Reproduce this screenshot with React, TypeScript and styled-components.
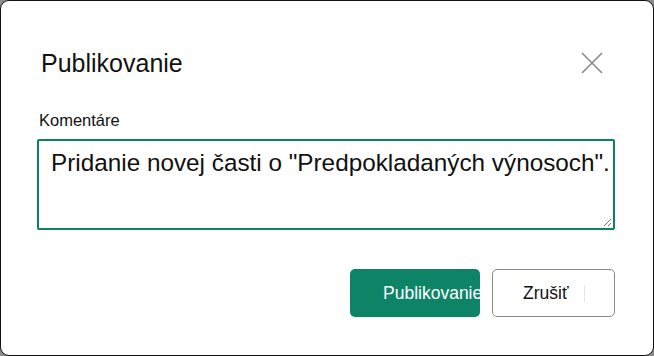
import React from "react";
import styled, { createGlobalStyle } from "styled-components";

const Global = createGlobalStyle`
  html, body { margin: 0; padding: 0; background: #8c8c8c; }
  body { font-family: "Liberation Sans", Arial, sans-serif; }
  * { box-sizing: border-box; }
`;

const Dialog = styled.div`
  width: 654px;
  height: 356px;
  background: #ffffff;
  border: 1.5px solid #111111;
  border-radius: 9px;
  display: flex;
  flex-direction: column;
  padding: 0 38px 0 36px;
  color: #111;
`;

const Header = styled.div`
  display: flex;
  align-items: center;
  justify-content: space-between;
  height: 58px;
  margin-top: 33px;
`;

const Title = styled.h1`
  margin: 0 0 0 4px;
  font-size: 25px;
  font-weight: 400;
  color: #111;
`;

const CloseButton = styled.button`
  border: none;
  background: none;
  padding: 0;
  width: 24px;
  height: 24px;
  margin-right: 11px;
  display: flex;
  align-items: center;
  justify-content: center;
  cursor: pointer;
`;

const Label = styled.label`
  margin-top: 19px;
  margin-left: 2px;
  font-size: 16.5px;
  color: #111;
`;

const Field = styled.div`
  position: relative;
  margin-top: 9px;
  height: 91px;
  border: 2px solid #0e8066;
  border-radius: 2px;
  padding: 7px 2px 8px 12px;
  font-size: 24.3px;
  line-height: 30px;
  white-space: nowrap;
  color: #111;
`;

const Grip = styled.svg`
  position: absolute;
  right: 1px;
  bottom: 1px;
`;

const Footer = styled.div`
  display: flex;
  justify-content: flex-end;
  gap: 12px;
  margin-top: 39px;
`;

const PrimaryButton = styled.button`
  width: 130px;
  height: 48px;
  border: none;
  border-radius: 5px;
  background: #0e8466;
  color: #ffffff;
  font-family: "Liberation Sans", Arial, sans-serif;
  font-size: 17.5px;
  padding: 0 0 0 33px;
  text-align: left;
  white-space: nowrap;
  overflow: hidden;
`;

const SecondaryButton = styled.button`
  position: relative;
  width: 123px;
  height: 48px;
  border: 1px solid #8a8a8a;
  border-radius: 5px;
  background: #ffffff;
  color: #111;
  font-family: "Liberation Sans", Arial, sans-serif;
  font-size: 17.5px;
  padding: 0 0 0 30px;
  text-align: left;
`;

const Divider = styled.span`
  position: absolute;
  left: 91px;
  top: 15px;
  width: 1px;
  height: 17px;
  background: #e6e6e6;
`;

export default function App() {
  return (
    <>
      <Global />
      <Dialog>
        <Header>
          <Title>Publikovanie</Title>
          <CloseButton aria-label="Zavrieť">
            <svg width="22" height="22" viewBox="0 0 22 22">
              <path d="M1 1 L21 21 M21 1 L1 21" stroke="#8a8a8a" strokeWidth="1.6" fill="none" />
            </svg>
          </CloseButton>
        </Header>
        <Label>Komentáre</Label>
        <Field>
          Pridanie novej časti o "Predpokladaných výnosoch".
          <Grip width="10" height="10" viewBox="0 0 10 10">
            <path d="M9 2 L2 9 M9 6 L6 9" stroke="#777" strokeWidth="1" fill="none" />
          </Grip>
        </Field>
        <Footer>
          <PrimaryButton>Publikovanie</PrimaryButton>
          <SecondaryButton>
            Zrušiť
            <Divider />
          </SecondaryButton>
        </Footer>
      </Dialog>
    </>
  );
}
